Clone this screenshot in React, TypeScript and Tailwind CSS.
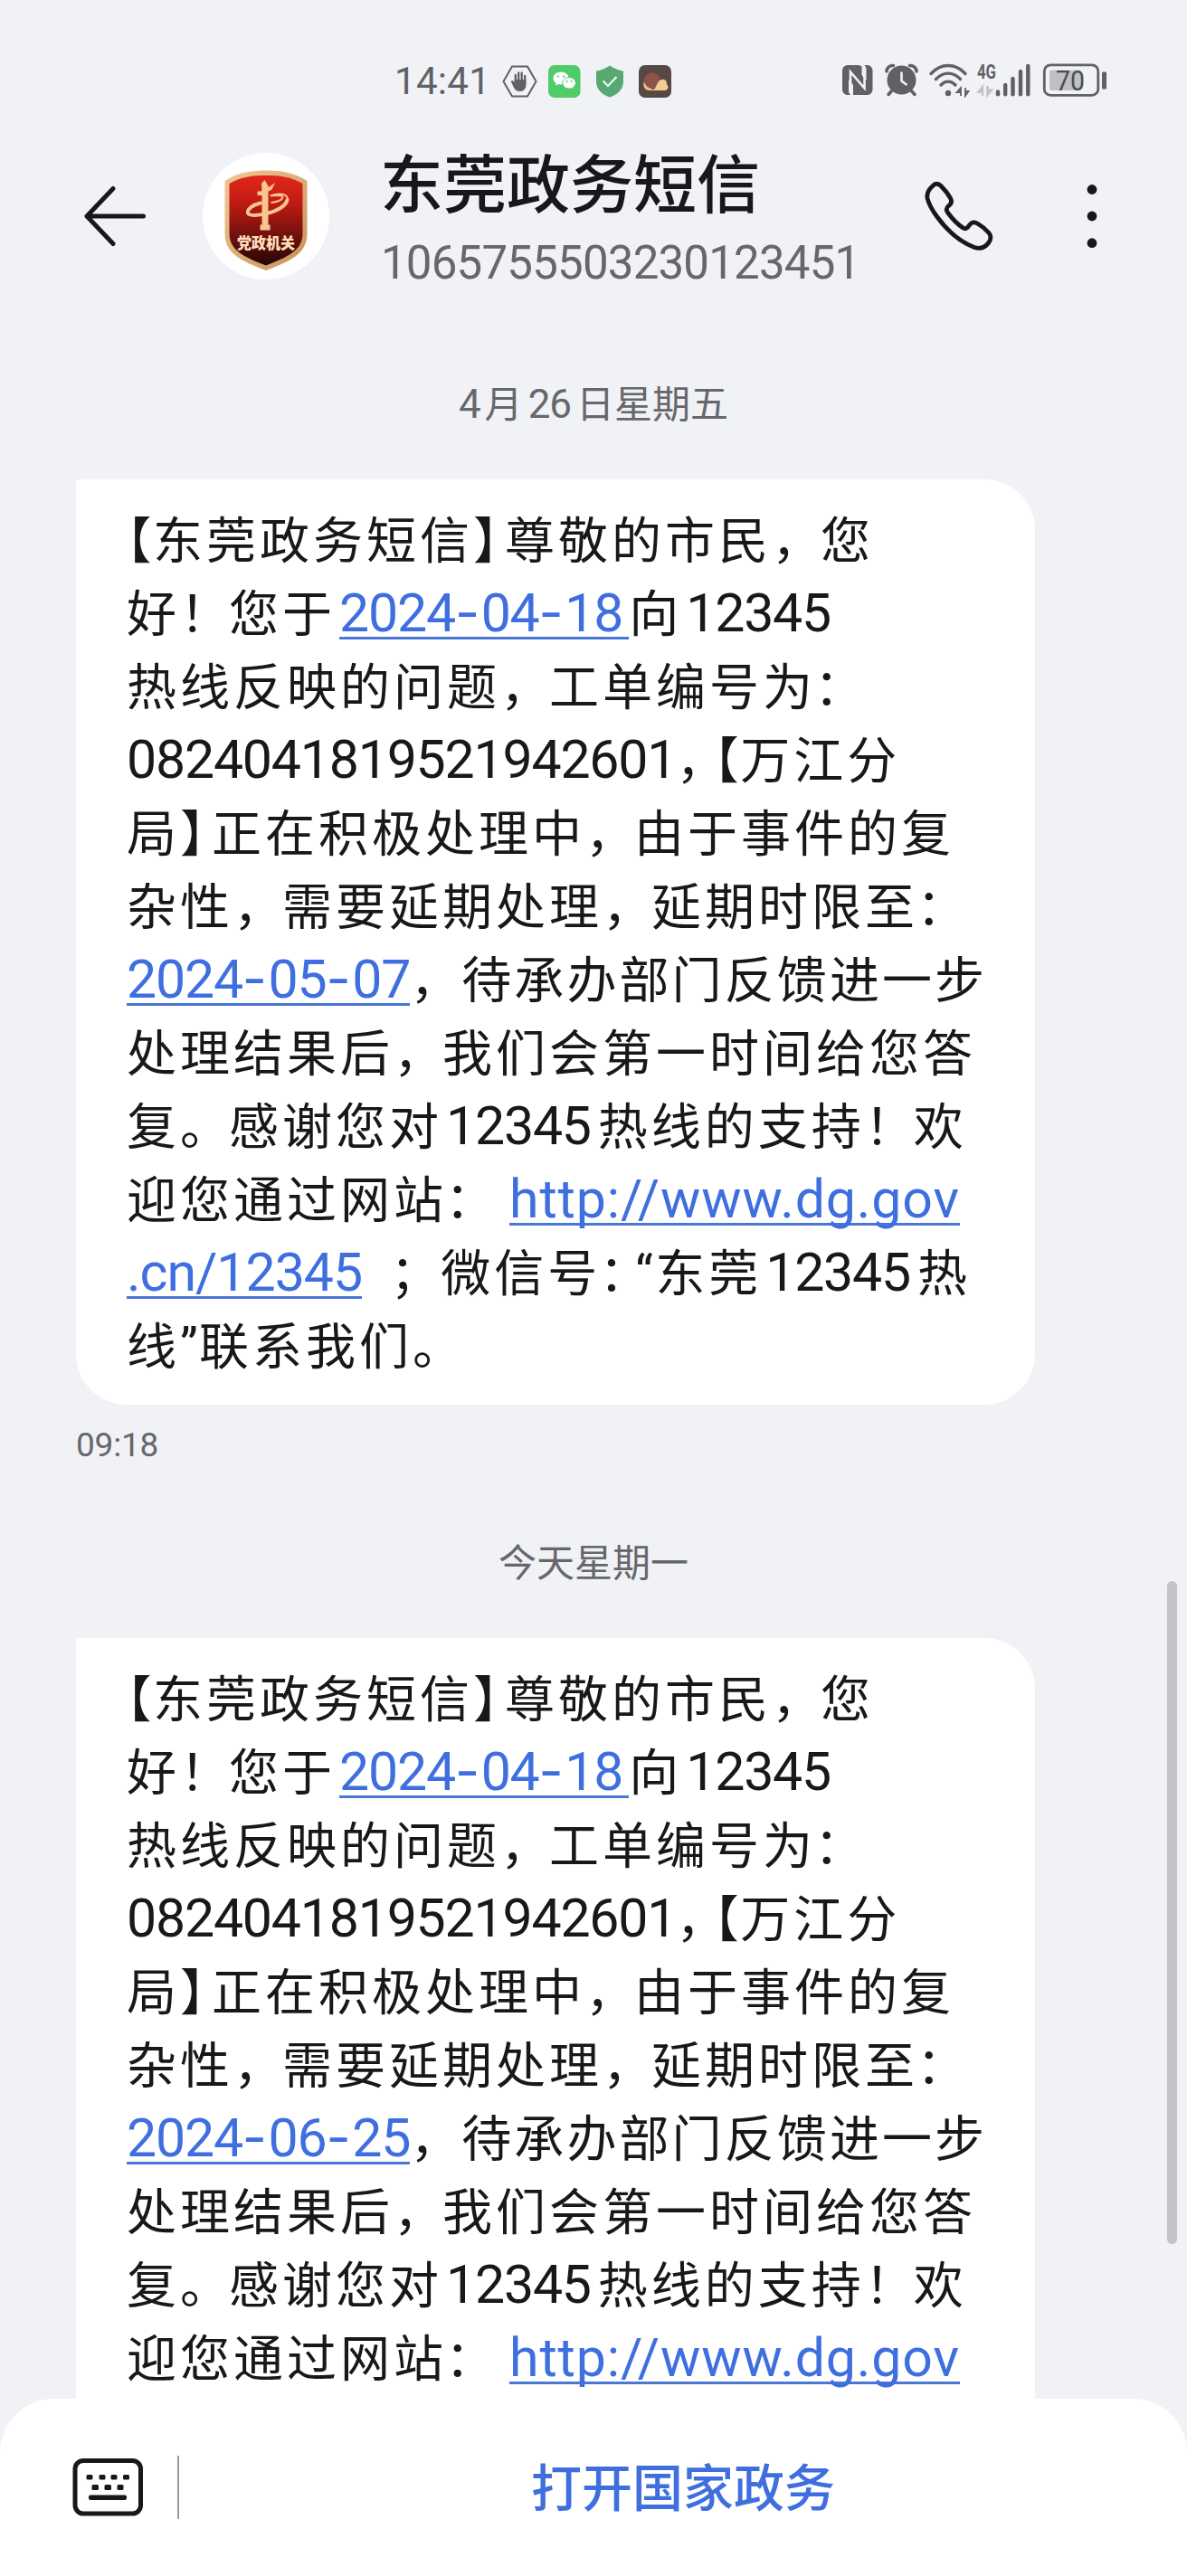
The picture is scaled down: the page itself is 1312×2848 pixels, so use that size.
import { clsx } from 'clsx';

const CJK = "font-['Noto_Sans_CJK_SC',sans-serif]";
const LATIN = "font-['Roboto','Noto_Sans_CJK_SC',sans-serif]";
const HALF = "[font-feature-settings:'halt']";

type Part = string | { link: string };

// One entry per rendered line of the bubble
const buildMessage = (deadline: string): Part[][] => [
  ['【东莞政务短信】尊敬的市民，您'],
  ['好！您于', { link: '2024-04-18' }, '向12345'],
  ['热线反映的问题，工单编号为：'],
  ['0824041819521942601，【万江分'],
  ['局】正在积极处理中，由于事件的复'],
  ['杂性，需要延期处理，延期时限至：'],
  [{ link: deadline }, '，待承办部门反馈进一步'],
  ['处理结果后，我们会第一时间给您答'],
  ['复。感谢您对12345热线的支持！欢'],
  ['迎您通过网站： ', { link: 'http://www.dg.gov' }],
  [{ link: '.cn/12345' }, ' ；微信号：“东莞12345热'],
  ['线”联系我们。'],
];

const TOKEN = /[【】“”，。！：；]|[0-9]+|\s+|[\u4e00-\u9fff]+/g;
const isHanzi = (ch: string | undefined) => !!ch && /[\u4e00-\u9fff]/.test(ch);
const plain = (p: Part | undefined) => (p === undefined ? '' : typeof p === 'string' ? p : p.link);

function punctClass(ch: string, next: string | undefined, first: boolean) {
  if (ch === '【') return clsx('w-[29px]', HALF);
  if (ch === '】') return clsx('w-[35px]', HALF);
  if (ch === '“') return clsx('w-[22px]', LATIN);
  if (ch === '”') return clsx('w-[21px]', LATIN);
  if (ch === '，' && next === '【') return clsx('w-[42px]', HALF);
  if (ch === '，' && first) return 'w-[57px]';
  if (ch === '：' && next === '“') return clsx('w-[38px] -indent-[2px]', HALF);
  if (ch === '：' || ch === '；') return clsx('w-[54px] -indent-[2px]', HALF);
  return 'w-[54px]';
}

function Link({ text, gapBefore, gapAfter }: { text: string; gapBefore: boolean; gapAfter: boolean }) {
  return (
    <a
      className={clsx(
        LATIN,
        'inline-block border-b-[3px] border-[#4a76d6] text-[59px] leading-[53px] font-[370] text-[#3f6fdf]',
        /^\d/.test(text) && 'tracking-[-1.2px]',
        text.startsWith('http') && 'tracking-[0.9px]',
        text.startsWith('.') && 'tracking-[-1px]',
        gapBefore && 'ml-1',
        gapAfter && 'pr-[7px]',
      )}
    >
      {text.split(/(-)/).map((s, i) =>
        s === '-' ? (
          <span key={i} className="font-['Inter',sans-serif] leading-[0px] tracking-[1.6px]">-</span>
        ) : (
          s
        ),
      )}
    </a>
  );
}

function Line({ parts }: { parts: Part[] }) {
  // 日期开头的行字距略紧
  const tight = typeof parts[0] !== 'string' && /^\d/.test(parts[0].link);
  return (
    <div className="h-[81px] whitespace-pre leading-[81px]">
      {parts.map((part, i) => {
        const prev = plain(parts[i - 1]).slice(-1);
        const next = plain(parts[i + 1])[0];
        if (typeof part !== 'string') {
          return <Link key={i} text={part.link} gapBefore={isHanzi(prev)} gapAfter={isHanzi(next)} />;
        }
        return [...part.matchAll(TOKEN)].map((m) => {
          const tok = m[0];
          const before = part[m.index - 1];
          const after = part[m.index + tok.length];
          const key = `${i}-${m.index}`;
          if (isHanzi(tok[0])) return <span key={key} className={tight ? 'tracking-[3.100px]' : 'tracking-[4px]'}>{tok}</span>;
          if (/^\d/.test(tok)) {
            return (
              <span
                key={key}
                className={clsx(LATIN, 'text-[59px] leading-none font-[370] tracking-[-1.2px]', isHanzi(before) && 'ml-1', isHanzi(after) && 'mr-2')}
              >
                {tok}
              </span>
            );
          }
          if (/^\s/.test(tok)) {
            return <span key={key} className={clsx('inline-block', before ? 'w-[15px]' : 'w-[33px]')}>{tok}</span>;
          }
          return <span key={key} className={clsx('inline-block', punctClass(tok, after, m.index === 0))}>{tok}</span>;
        });
      })}
    </div>
  );
}

function Bubble({ lines }: { lines: Part[][] }) {
  return (
    <div className={clsx(CJK, 'ml-[84px] w-[1060px] rounded-[56px] rounded-tl-none bg-white pt-[23px] pr-4 pb-[28px] pl-[56px] text-[55px] text-[#18181a]')}>
      {lines.map((parts, i) => (
        <Line key={i} parts={parts} />
      ))}
    </div>
  );
}

function StatusBar() {
  return (
    <div className="flex h-[150px] items-start pt-[68px] text-[#606166]">
      <div className={clsx(LATIN, 'ml-[436px] w-[119px] text-[42px] leading-[44px] font-[450] tracking-[0.3px]')}>14:41</div>
      <svg className="h-[44px] w-[190px]" viewBox="555 68 190 44" fill="none">
        {/* 勿扰手势 */}
        <path d="M566 73.500h17l9.500 16.500-9.500 16.500h-17L556.500 90z" stroke="currentColor" strokeWidth="2" strokeLinejoin="round" />
        <path d="M569.800 92V83M573.200 90V80.500M576.700 90V80.500M580.200 92V84" stroke="currentColor" strokeWidth="2.300" strokeLinecap="round" />
        <path d="M568.700 88H581.400V94C581.400 98.500 578.500 101 574.500 101C571 101 569 99 567.500 96L565 90.500C564.800 88.500 567 88.200 568.700 91.500Z" fill="currentColor" />
        {/* 微信 */}
        <rect x="606" y="72" width="35.500" height="36" rx="7" fill="#4fcb68" />
        <path d="M620 79.500c-5 0-8.500 3.200-8.500 7 0 2.300 1.200 4.200 3.200 5.500l-.8 2.800 3.300-1.700c1 .2 1.900.4 2.800.4 5 0 8.600-3.100 8.600-7s-3.600-7-8.600-7z" fill="#fff" />
        <path d="M629 85.500c-4.200 0-7.300 2.800-7.300 6.200s3.100 6.300 7.300 6.300c.9 0 1.700-.1 2.500-.4l2.700 1.600-.7-2.600c1.800-1.200 2.800-2.900 2.800-4.900 0-3.400-3.100-6.200-7.300-6.200z" fill="#fff" stroke="#4fcb68" strokeWidth="1" />
        <g fill="#4fcb68">
          <circle cx="617" cy="84.500" r="1.100" />
          <circle cx="623" cy="84.500" r="1.100" />
          <circle cx="626.500" cy="90" r="1" />
          <circle cx="631.500" cy="90" r="1" />
        </g>
        {/* 安全盾牌 */}
        <path d="M674 72.500C669 76 664 77.500 659 78.500V90C659 98.500 665 104.500 674 107.500C683 104.500 689 98.500 689 90V78.500C684 77.500 679 76 674 72.500Z" fill="#57a872" />
        <path d="M666.500 89.500l5.500 5.500 9.500-10" stroke="#eef7f0" strokeWidth="2.200" />
        {/* 浏览器 */}
        <rect x="706" y="72" width="36" height="36" rx="7" fill="#564843" />
        <path d="M711.500 90.500c-1 5 1 9.500 6 9.500h5z" fill="#f0b98a" />
        <circle cx="721" cy="89" r="8.800" fill="#8f5249" />
        <path d="M719 100c4.500-.5 5.500-3 7-6.500 1.500-4 4.500-6.500 8-5.500 2.500.7 3.300 3 2.800 5 1.200.8 1.700 2 1.700 3.200 0 2.300-1.800 3.800-4 3.800z" fill="#f5cd94" />
      </svg>
      <svg className="ml-[181px] h-[44px] w-[298px]" viewBox="926 68 298 44" fill="none">
        {/* NFC：两片交错的 N 形 */}
        <path d="M937.500 72H943L957.500 89V76.500C957.500 74 956 72 953.500 72H958C962 72 964.500 74.500 964.500 78.500V98.500C964.500 102.500 962 105 958 105H952.500L938 88V100.500C938 103 939.500 105 942 105H937.500C933.500 105 931 102.500 931 98.500V78.500C931 74.500 933.500 72 937.500 72Z" fill="currentColor" />
        <path d="M942.500 105C940.500 104 940 102.500 940 100.500V79.500L955.500 97.500V76.500C955.500 74.500 955 73 953 72" stroke="#f1f2f6" strokeWidth="2.600" />
        <path d="M943 87v18h9.500V98z" fill="currentColor" />
        <path d="M943 72l9.500 13V73.500l-3-1.500z" fill="currentColor" />
        {/* 闹钟 */}
        <circle cx="996.500" cy="88.500" r="16" fill="currentColor" />
        <path d="M980 79c0-4 3.500-7 7.500-6.500M1013 79c0-4-3.500-7-7.500-6.500" stroke="currentColor" strokeWidth="3.500" strokeLinecap="round" />
        <path d="M985.500 100.500l-3.500 4M1007.500 100.500l3.500 4" stroke="currentColor" strokeWidth="3.500" strokeLinecap="round" />
        <path d="M996.500 79.500v10l6 4.500" stroke="#f1f2f6" strokeWidth="2.600" />
        {/* WLAN */}
        <g stroke="currentColor" strokeWidth="3.400" strokeLinecap="round">
          <path d="M1029 81.500c11-12 27-12 38 0" />
          <path d="M1034.500 87.500c8-8.500 19-8.500 27 0" />
          <path d="M1040 94c5-5 11-5 16 0" />
        </g>
        <circle cx="1048" cy="103" r="3.200" fill="currentColor" />
        <path d="M1062 106v-9l-4.500 5h4.500M1067 97v9l3.500-5h-3.500" stroke="currentColor" strokeWidth="1.800" fill="currentColor" />
        {/* 移动信号 */}
        <text x="1080" y="87" fontSize="22" fontWeight="700" textLength="21" lengthAdjust="spacingAndGlyphs" fill="currentColor" fontFamily="Roboto, sans-serif">4G</text>
        <path d="M1086 106v-10l-4.500 5.500h4.500M1091.500 95v10l4.500-5.500h-4.500" stroke="#c3c4c8" strokeWidth="2.400" fill="#c3c4c8" />
        <g stroke="currentColor" strokeWidth="4.400" strokeLinecap="round">
          <path d="M1103 101.500v2.800" />
          <path d="M1111.200 94v10.300" />
          <path d="M1119.500 87v17.300" />
          <path d="M1128 79v25.300" />
          <path d="M1136.300 73v31.300" />
        </g>
        {/* 电池 */}
        <rect x="1154.300" y="71.800" width="59.500" height="33.600" rx="7" stroke="currentColor" strokeWidth="2.800" />
        <rect x="1160" y="77.500" width="35" height="22.500" rx="3" fill="#bfc0c4" />
        <rect x="1218" y="79.500" width="5" height="19" rx="1" fill="currentColor" />
        <text x="1167" y="99.500" fontSize="30.500" textLength="32" lengthAdjust="spacingAndGlyphs" fill="#4b4c50" fontFamily="Roboto, sans-serif">70</text>
      </svg>
    </div>
  );
}

function Avatar() {
  return (
    <svg className="h-[142px] w-[142px]" viewBox="0 0 142 142">
      <defs>
        <linearGradient id="shield" x1="0" y1="0" x2="0" y2="1">
          <stop offset="0" stopColor="#e0281a" />
          <stop offset="0.3" stopColor="#c21a14" />
          <stop offset="0.65" stopColor="#74110e" />
          <stop offset="1" stopColor="#240606" />
        </linearGradient>
        <linearGradient id="shieldEdge" x1="0" y1="0" x2="1" y2="1">
          <stop offset="0" stopColor="#f3c795" />
          <stop offset="1" stopColor="#c59258" />
        </linearGradient>
      </defs>
      <circle cx="71" cy="71" r="70" fill="#fff" />
      <path d="M25.500 32C39 23 54 20.500 71 20.500S103 23 116.500 32V90C116.500 113 97 121 71 131C45 121 25.500 113 25.500 90Z" fill="url(#shieldEdge)" />
      <path d="M30.500 35C43 27.500 56 26 71 26S99 27.500 111.500 35V90C111.500 109 95 116 71 125.500C47 116 30.500 109 30.500 90Z" fill="url(#shield)" />
      <g fill="#f8c58f">
        <path d="M66.500 42L66 35 69.500 31l2.500 4 2 4 7-5-3.500 7.500-5.500 3z" />
        <path d="M66 42h7.500V80.500H75.500v6h-11v-6H66.500V48H61.500v-4.500H66z" />
      </g>
      <path d="M65 56.500C56 58.500 50 63.500 51 67.500C53 74 91 67 94.500 53" fill="none" stroke="#f8c58f" strokeWidth="4" strokeLinecap="round" />
      <path d="M94.500 54C97 45.500 84 45 76 48.500C84 47.500 90 48 89.500 50.500C88.500 53.500 82 55.500 76.500 56" fill="none" stroke="#f8c58f" strokeWidth="2" />
      <text x="39" y="107" fontSize="16.500" fontWeight="900" textLength="64" lengthAdjust="spacingAndGlyphs" fill="#ffdfba" fontFamily="'Noto Sans CJK SC', sans-serif">党政机关</text>
    </svg>
  );
}

function Header() {
  return (
    <header className="flex h-[178px] items-start">
      <svg className="mt-[52px] ml-[90px] h-[74px] w-[76px]" viewBox="90 202 76 74" fill="none" stroke="#17181c" strokeWidth="5" strokeLinecap="round" strokeLinejoin="round">
        <path d="M125 208.500L96 239l29 30.500M96 239h62.500" />
      </svg>
      <div className="mt-[18px] ml-[57px]">
        <Avatar />
      </div>
      <div className="ml-[55px] w-[590px]">
        <h1 className={clsx(CJK, 'mt-[12px] text-[70px] leading-[76px] font-medium text-[#17181c]')}>东莞政务短信</h1>
        <p className={clsx(LATIN, 'mt-[23px] ml-[1px] text-[51px] leading-[60px] font-[370] tracking-[-0.8px] text-[#66676b]')}>1065755503230123451</p>
      </div>
      <svg className="mt-[46px] ml-[6px] h-[84px] w-[206px]" viewBox="1016 196 206 84" fill="none">
        <path
          d="M1031 205.500C1033.500 202.500 1037 202.500 1040 205.500C1044 209.500 1048 214.500 1050.500 219C1052.500 223 1051.500 225.500 1048.500 227.500C1046 229.500 1045.500 232 1047.500 235C1053 242.500 1058.500 248 1064.500 252C1067 253.500 1069 252.500 1071 249.500C1074 245 1077 245 1081 247.500C1086 250.500 1090 254 1093 257.500C1096 261 1095.500 264 1093 268C1089 273.500 1083 275.500 1077 273.500C1060 267 1047 255 1036 240C1030 232 1026.500 225 1025 219C1024 213.500 1026.500 209.500 1031 205.500Z"
          stroke="#17181c"
          strokeWidth="4.800"
          strokeLinejoin="round"
        />
        <g fill="#17181c">
          <circle cx="1207" cy="209.500" r="5.400" />
          <circle cx="1207" cy="239" r="5.400" />
          <circle cx="1207" cy="268.700" r="5.400" />
        </g>
      </svg>
    </header>
  );
}

function Footer() {
  return (
    <footer className="relative z-10 -mt-[60px] flex h-[196px] items-start rounded-t-[60px] bg-white">
      <svg className="mt-[62px] ml-[78px] h-[70px] w-[82px]" viewBox="78 2714 82 70" fill="none">
        <rect x="83" y="2720.500" width="72.500" height="58.500" rx="9" stroke="#18181a" strokeWidth="5" />
        <g fill="#18181a">
          <rect x="95.500" y="2736" width="7" height="5.500" rx="1.500" />
          <rect x="109.500" y="2736" width="7" height="5.500" rx="1.500" />
          <rect x="122.500" y="2736" width="7" height="5.500" rx="1.500" />
          <rect x="136" y="2736" width="7" height="5.500" rx="1.500" />
          <rect x="101.500" y="2747" width="7.500" height="6" rx="1.500" />
          <rect x="115.500" y="2747" width="7.500" height="6" rx="1.500" />
          <rect x="129.500" y="2747" width="7" height="6" rx="1.500" />
          <rect x="98" y="2758.500" width="42" height="5.500" rx="2" />
        </g>
      </svg>
      <div className="mt-[63px] ml-[36px] h-[70px] w-[2px] bg-[#9c9c9e]" />
      <button className={clsx(CJK, 'mt-[60px] flex-1 text-center text-[56px] leading-[70px] font-medium text-[#3f6fdf]')}>
        打开国家政务
      </button>
    </footer>
  );
}

export default function App() {
  return (
    <div className="flex h-[2848px] w-[1312px] flex-col overflow-hidden bg-[#f1f2f6]">
      <StatusBar />
      <Header />
      <main className="relative h-[2384px] shrink-0 overflow-hidden">
        <p className={clsx(CJK, 'mt-[86px] flex h-[60px] items-baseline justify-center text-[42px] leading-[60px] text-[#66676b]')}>
          <span className={clsx(LATIN, 'mr-[4px] text-[44px] leading-none font-[370]')}>4</span>
          月
          <span className={clsx(LATIN, 'mx-[6px] text-[44px] leading-none font-[370] tracking-[-1px]')}>26</span>
          日星期五
        </p>
        <div className="mt-[56px]">
          <Bubble lines={buildMessage('2024-05-07')} />
        </div>
        <p className={clsx(LATIN, 'mt-[20px] ml-[84px] text-[37px] leading-[50px] font-[370] tracking-[-0.2px] text-[#66676b]')}>09:18</p>
        <p className={clsx(CJK, 'mt-[72px] text-center text-[42px] leading-[60px] text-[#66676b]')}>今天星期一</p>
        <div className="mt-[56px]">
          <Bubble lines={buildMessage('2024-06-25')} />
        </div>
        <div className="absolute top-[1420px] left-[1290px] h-[733px] w-[11px] rounded-full bg-[#c3c4c9]" />
      </main>
      <Footer />
    </div>
  );
}
